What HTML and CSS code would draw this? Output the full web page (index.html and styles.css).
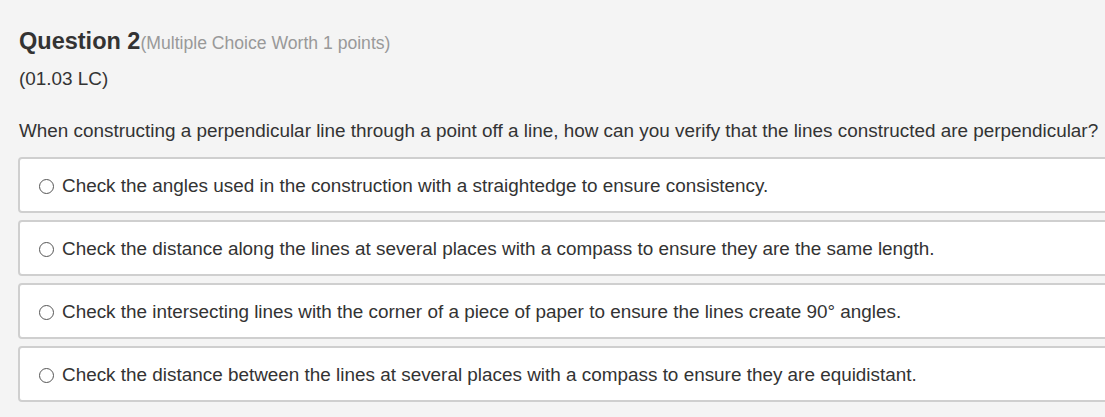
FILE: index.html
```html
<!DOCTYPE html>
<html>
<head>
<meta charset="utf-8">
<link rel="stylesheet" href="styles.css">
</head>
<body>
<div class="page">
  <h2 class="q-title">Question 2<span class="q-meta">(Multiple Choice Worth 1 points)</span></h2>
  <p class="q-code">(01.03 LC)</p>
  <p class="q-text">When constructing a perpendicular line through a point off a line, how can you verify that the lines constructed are perpendicular?</p>
  <ul class="options">
    <li class="option"><span class="radio"></span><span class="opt-text">Check the angles used in the construction with a straightedge to ensure consistency.</span></li>
    <li class="option"><span class="radio"></span><span class="opt-text">Check the distance along the lines at several places with a compass to ensure they are the same length.</span></li>
    <li class="option"><span class="radio"></span><span class="opt-text">Check the intersecting lines with the corner of a piece of paper to ensure the lines create 90° angles.</span></li>
    <li class="option"><span class="radio"></span><span class="opt-text">Check the distance between the lines at several places with a compass to ensure they are equidistant.</span></li>
  </ul>
</div>
</body>
</html>
```
FILE: styles.css
```css
html, body {
  margin: 0;
  padding: 0;
  background: #f4f4f4;
  overflow: hidden;
}
body {
  font-family: "Liberation Sans", Arial, sans-serif;
  color: #333;
}
.page {
  width: 1130px;
  padding: 26px 0 0 18px;
}
.q-title {
  margin: 0 0 0 1px;
  font-size: 23.5px;
  font-weight: bold;
  line-height: 30px;
  color: #333;
}
.q-meta {
  font-size: 17.6px;
  font-weight: normal;
  color: #999;
}
.q-code {
  margin: 9px 0 0 1px;
  font-size: 18.9px;
  line-height: 24px;
}
.q-text {
  margin: 28px 0 0 1px;
  font-size: 18.9px;
  line-height: 24px;
}
.options {
  list-style: none;
  margin: 14px 0 0 0;
  padding: 0;
}
.option {
  display: flex;
  align-items: center;
  height: 56px;
  box-sizing: border-box;
  margin-bottom: 7px;
  padding: 2px 0 0 19px;
  background: #fff;
  border: 2px solid #cfcfcf;
  border-radius: 4px;
  font-size: 18.9px;
}
.radio {
  width: 15px;
  height: 15px;
  box-sizing: border-box;
  border: 1px solid #555;
  border-radius: 50%;
  margin-right: 8px;
  flex: none;
}
.opt-text {
  white-space: nowrap;
}
```
